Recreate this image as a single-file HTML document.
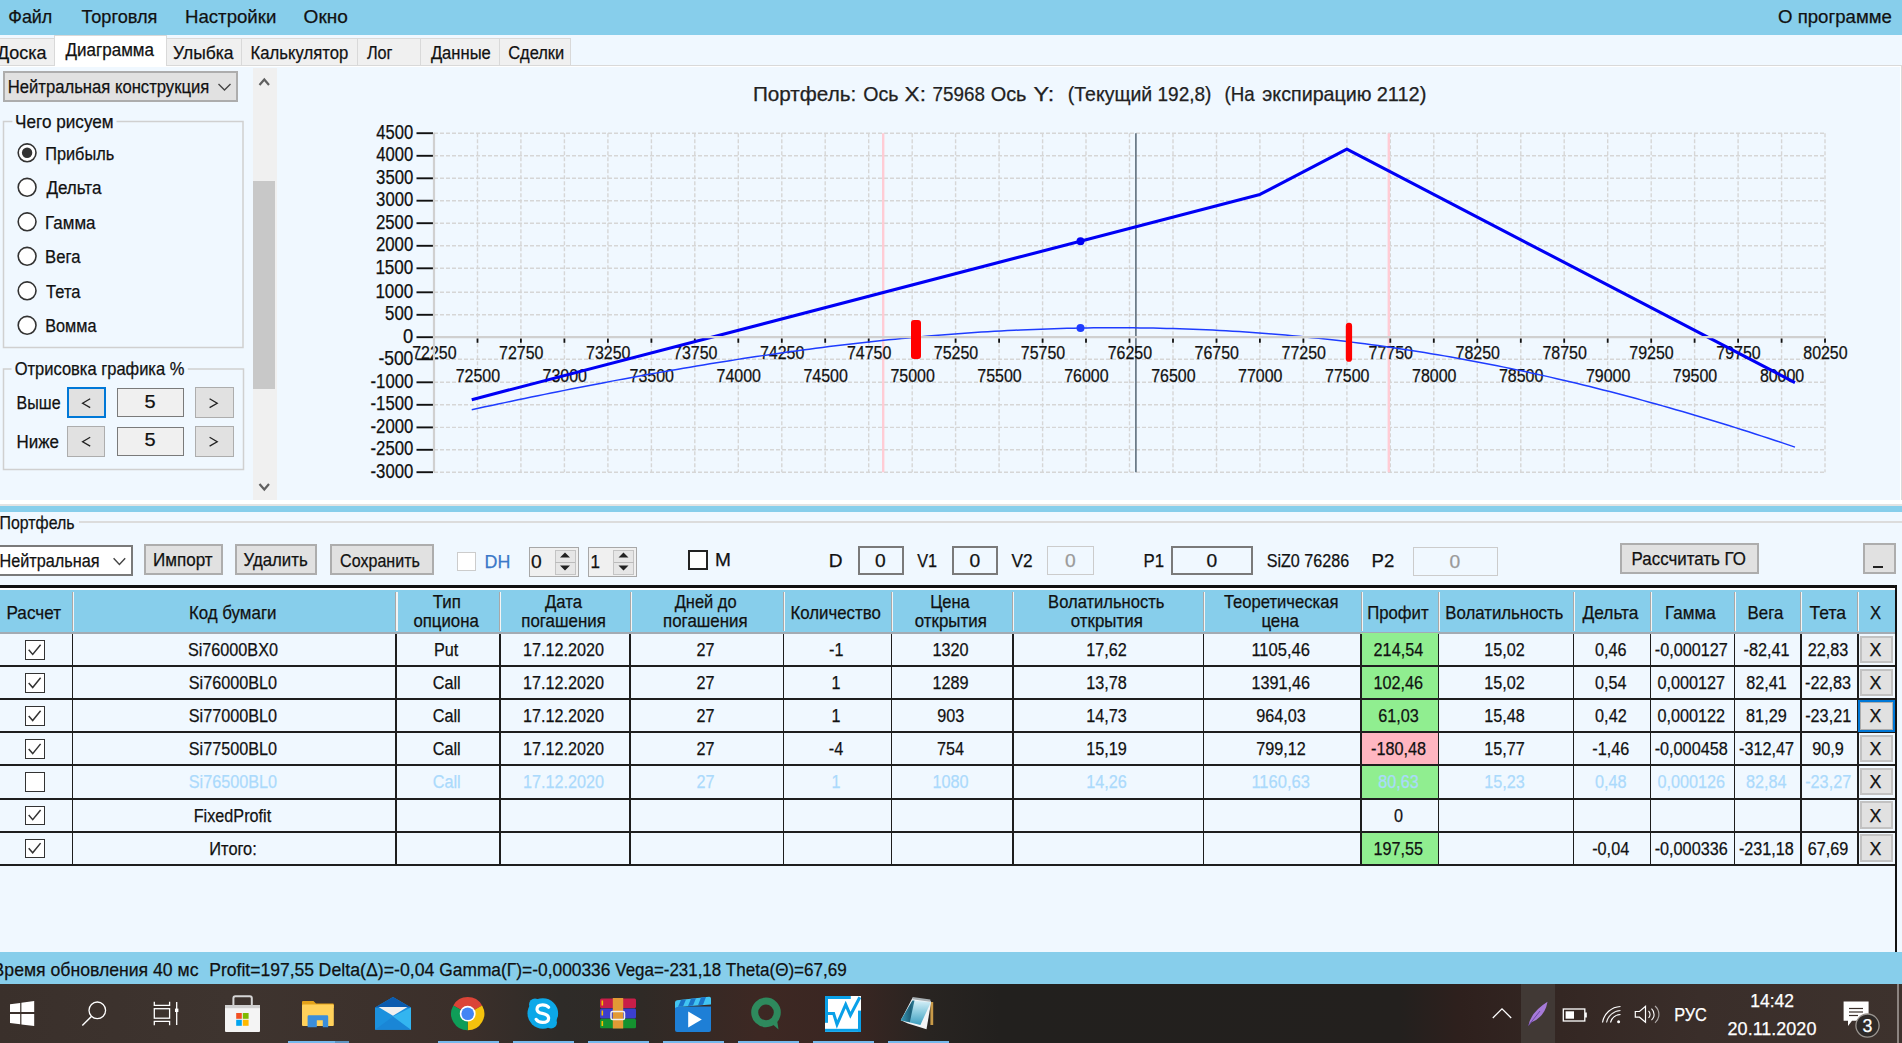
<!DOCTYPE html>
<html><head><meta charset="utf-8"><title>Portfolio</title>
<style>
html,body{margin:0;padding:0;width:1902px;height:1043px;overflow:hidden;background:#F0F8FF;}
#root{position:relative;width:1902px;height:1043px;overflow:hidden;font-family:"Liberation Sans",sans-serif;}
#root>div{position:absolute;}
svg text{font-family:"Liberation Sans",sans-serif;}
</style></head><body><div id="root">
<div style="left:0px;top:0px;width:1902px;height:1043px;background:#F0F8FF;"></div>
<div style="left:0px;top:0px;width:1902px;height:35px;background:#87CEEB;"></div>
<div style="left:0px;top:65px;width:1902px;height:1px;background:#D9D9D9;"></div>
<div style="left:0px;top:66px;width:1902px;height:1px;background:#FFFFFF;"></div>
<div style="left:1901px;top:65px;width:1px;height:436px;background:#D9D9D9;"></div>
<div style="left:1900px;top:66px;width:1px;height:434px;background:#FFFFFF;"></div>
<div style="left:-10px;top:38px;width:65px;height:28px;background:#F0F0F0;border:1px solid #D9D9D9;box-sizing:border-box;"></div>
<div style="left:166px;top:38px;width:76px;height:28px;background:#F0F0F0;border:1px solid #D9D9D9;box-sizing:border-box;"></div>
<div style="left:241px;top:38px;width:117px;height:28px;background:#F0F0F0;border:1px solid #D9D9D9;box-sizing:border-box;"></div>
<div style="left:357px;top:38px;width:64px;height:28px;background:#F0F0F0;border:1px solid #D9D9D9;box-sizing:border-box;"></div>
<div style="left:420px;top:38px;width:80px;height:28px;background:#F0F0F0;border:1px solid #D9D9D9;box-sizing:border-box;"></div>
<div style="left:499px;top:38px;width:72px;height:28px;background:#F0F0F0;border:1px solid #D9D9D9;box-sizing:border-box;"></div>
<div style="left:54px;top:35px;width:113px;height:32px;background:#FFFFFF;"></div>
<div style="left:54px;top:35px;width:1px;height:31px;background:#D9D9D9;"></div>
<div style="left:166px;top:35px;width:1px;height:31px;background:#D9D9D9;"></div>
<div style="left:54px;top:35px;width:113px;height:1px;background:#D9D9D9;"></div>
<div style="left:3px;top:71px;width:235px;height:31px;background:#E1E1E1;border:2px solid #ADADAD;box-sizing:border-box;"></div>
<div style="left:253px;top:68px;width:24px;height:432px;background:#F0F0F0;"></div>
<div style="left:253px;top:181px;width:22px;height:208px;background:#C8C8C8;"></div>
<div style="left:67px;top:387px;width:39px;height:31px;background:#E1E1E1;border:2px solid #0078D7;box-sizing:border-box;"></div>
<div style="left:117px;top:388px;width:67px;height:29px;background:#F0F0F0;border:1px solid #7A7A7A;box-sizing:border-box;"></div>
<div style="left:195px;top:387px;width:39px;height:31px;background:#E1E1E1;border:1px solid #ADADAD;box-sizing:border-box;"></div>
<div style="left:67px;top:425.5px;width:38px;height:31px;background:#E1E1E1;border:1px solid #ADADAD;box-sizing:border-box;"></div>
<div style="left:117px;top:426.5px;width:67px;height:29px;background:#F0F0F0;border:1px solid #7A7A7A;box-sizing:border-box;"></div>
<div style="left:195px;top:425.5px;width:39px;height:31px;background:#E1E1E1;border:1px solid #ADADAD;box-sizing:border-box;"></div>
<div style="left:0px;top:500px;width:1902px;height:5px;background:#FFFFFF;"></div>
<div style="left:0px;top:504px;width:1902px;height:2px;background:#E3E3E3;"></div>
<div style="left:0px;top:506px;width:1902px;height:6px;background:#87CEEB;"></div>
<div style="left:79px;top:521px;width:1823px;height:1.5px;background:#DCDCDC;"></div>
<div style="left:-2px;top:545px;width:135px;height:31px;background:#FFFFFF;border:2px solid #7A7A7A;box-sizing:border-box;"></div>
<div style="left:144px;top:544px;width:79px;height:31px;background:#E1E1E1;border:2px solid #ADADAD;box-sizing:border-box;"></div>
<div style="left:235px;top:544px;width:82px;height:31px;background:#E1E1E1;border:2px solid #ADADAD;box-sizing:border-box;"></div>
<div style="left:330px;top:544px;width:104px;height:31px;background:#E1E1E1;border:2px solid #ADADAD;box-sizing:border-box;"></div>
<div style="left:457px;top:552px;width:19px;height:19px;background:#FFFFFF;border:1.5px solid #CCCCCC;box-sizing:border-box;"></div>
<div style="left:529px;top:547px;width:49.5px;height:29.5px;background:#F0F0F0;border:1.5px solid #A8A8A8;box-sizing:border-box;"></div>
<div style="left:554.5px;top:549.5px;width:21px;height:25px;background:#E6E6E6;border:1px solid #C4C4C4;box-sizing:border-box;"></div>
<div style="left:555px;top:561.5px;width:20px;height:1.2px;background:#BBBBBB;"></div>
<div style="left:587.5px;top:547px;width:49.5px;height:29.5px;background:#F0F0F0;border:1.5px solid #A8A8A8;box-sizing:border-box;"></div>
<div style="left:613.0px;top:549.5px;width:21px;height:25px;background:#E6E6E6;border:1px solid #C4C4C4;box-sizing:border-box;"></div>
<div style="left:613.5px;top:561.5px;width:20px;height:1.2px;background:#BBBBBB;"></div>
<div style="left:688px;top:550px;width:19.5px;height:19.5px;background:#FFFFFF;border:2px solid #222;box-sizing:border-box;"></div>
<div style="left:857.5px;top:545.5px;width:46px;height:29.5px;background:#F0F8FF;border:2px solid #7A7A7A;box-sizing:border-box;"></div>
<div style="left:952px;top:545.5px;width:46px;height:29.5px;background:#F0F8FF;border:2px solid #7A7A7A;box-sizing:border-box;"></div>
<div style="left:1047px;top:546px;width:47px;height:29px;background:#F0F8FF;border:1.5px solid #CCCCCC;box-sizing:border-box;"></div>
<div style="left:1171px;top:545.5px;width:82px;height:29.5px;background:#F0F8FF;border:2px solid #7A7A7A;box-sizing:border-box;"></div>
<div style="left:1413px;top:547px;width:84.5px;height:29px;background:#F0F8FF;border:1.5px solid #CCCCCC;box-sizing:border-box;"></div>
<div style="left:1619.5px;top:542.5px;width:139.0px;height:31.0px;background:#E1E1E1;border:2px solid #ADADAD;box-sizing:border-box;"></div>
<div style="left:1862.5px;top:542.5px;width:33.0px;height:31.0px;background:#E1E1E1;border:2px solid #ADADAD;box-sizing:border-box;"></div>
<div style="left:1872.5px;top:566.2px;width:10px;height:2.2px;background:#222;"></div>
<div style="left:0px;top:588px;width:1896px;height:2px;background:#FFFFFF;"></div>
<div style="left:0px;top:590px;width:1896px;height:42px;background:#87CEEB;"></div>
<div style="left:0px;top:632px;width:1896px;height:2px;background:#A3ABB3;"></div>
<div style="left:71.8px;top:592px;width:1px;height:38.5px;background:#A8A8A8;"></div>
<div style="left:72.8px;top:592px;width:1.2px;height:38.5px;background:#F4F4F4;"></div>
<div style="left:395.4px;top:592px;width:1px;height:38.5px;background:#A8A8A8;"></div>
<div style="left:396.4px;top:592px;width:1.2px;height:38.5px;background:#F4F4F4;"></div>
<div style="left:499.1px;top:592px;width:1px;height:38.5px;background:#A8A8A8;"></div>
<div style="left:500.1px;top:592px;width:1.2px;height:38.5px;background:#F4F4F4;"></div>
<div style="left:629.6px;top:592px;width:1px;height:38.5px;background:#A8A8A8;"></div>
<div style="left:630.6px;top:592px;width:1.2px;height:38.5px;background:#F4F4F4;"></div>
<div style="left:782.7px;top:592px;width:1px;height:38.5px;background:#A8A8A8;"></div>
<div style="left:783.7px;top:592px;width:1.2px;height:38.5px;background:#F4F4F4;"></div>
<div style="left:890.8px;top:592px;width:1px;height:38.5px;background:#A8A8A8;"></div>
<div style="left:891.8px;top:592px;width:1.2px;height:38.5px;background:#F4F4F4;"></div>
<div style="left:1012.0px;top:592px;width:1px;height:38.5px;background:#A8A8A8;"></div>
<div style="left:1013.0px;top:592px;width:1.2px;height:38.5px;background:#F4F4F4;"></div>
<div style="left:1202.7px;top:592px;width:1px;height:38.5px;background:#A8A8A8;"></div>
<div style="left:1203.7px;top:592px;width:1.2px;height:38.5px;background:#F4F4F4;"></div>
<div style="left:1360.5px;top:592px;width:1px;height:38.5px;background:#A8A8A8;"></div>
<div style="left:1361.5px;top:592px;width:1.2px;height:38.5px;background:#F4F4F4;"></div>
<div style="left:1437.9px;top:592px;width:1px;height:38.5px;background:#A8A8A8;"></div>
<div style="left:1438.9px;top:592px;width:1.2px;height:38.5px;background:#F4F4F4;"></div>
<div style="left:1572.9px;top:592px;width:1px;height:38.5px;background:#A8A8A8;"></div>
<div style="left:1573.9px;top:592px;width:1.2px;height:38.5px;background:#F4F4F4;"></div>
<div style="left:1649.8px;top:592px;width:1px;height:38.5px;background:#A8A8A8;"></div>
<div style="left:1650.8px;top:592px;width:1.2px;height:38.5px;background:#F4F4F4;"></div>
<div style="left:1733.9px;top:592px;width:1px;height:38.5px;background:#A8A8A8;"></div>
<div style="left:1734.9px;top:592px;width:1.2px;height:38.5px;background:#F4F4F4;"></div>
<div style="left:1800.1px;top:592px;width:1px;height:38.5px;background:#A8A8A8;"></div>
<div style="left:1801.1px;top:592px;width:1.2px;height:38.5px;background:#F4F4F4;"></div>
<div style="left:1857.3px;top:592px;width:1px;height:38.5px;background:#A8A8A8;"></div>
<div style="left:1858.3px;top:592px;width:1.2px;height:38.5px;background:#F4F4F4;"></div>
<div style="left:1361.1px;top:633.2px;width:77.40000000000009px;height:33.059999999999945px;background:#90EE90;"></div>
<div style="left:1361.1px;top:666.26px;width:77.40000000000009px;height:33.06000000000006px;background:#90EE90;"></div>
<div style="left:1361.1px;top:699.32px;width:77.40000000000009px;height:33.06000000000006px;background:#90EE90;"></div>
<div style="left:1361.1px;top:732.3800000000001px;width:77.40000000000009px;height:33.059999999999945px;background:#FFB6C1;"></div>
<div style="left:1361.1px;top:765.44px;width:77.40000000000009px;height:33.059999999999945px;background:#90EE90;"></div>
<div style="left:1361.1px;top:831.5600000000001px;width:77.40000000000009px;height:33.06000000000006px;background:#90EE90;"></div>
<div style="left:0px;top:665.3px;width:1896px;height:2px;background:#1E1E1E;"></div>
<div style="left:0px;top:698.3px;width:1896px;height:2px;background:#1E1E1E;"></div>
<div style="left:0px;top:731.4px;width:1896px;height:2px;background:#1E1E1E;"></div>
<div style="left:0px;top:764.4px;width:1896px;height:2px;background:#1E1E1E;"></div>
<div style="left:0px;top:797.5px;width:1896px;height:2px;background:#1E1E1E;"></div>
<div style="left:0px;top:830.6px;width:1896px;height:2px;background:#1E1E1E;"></div>
<div style="left:0px;top:863.6px;width:1896px;height:2px;background:#1E1E1E;"></div>
<div style="left:71.6px;top:634px;width:1.8px;height:230.62000000000012px;background:#1E1E1E;"></div>
<div style="left:395.2px;top:634px;width:1.8px;height:230.62000000000012px;background:#1E1E1E;"></div>
<div style="left:498.9px;top:634px;width:1.8px;height:230.62000000000012px;background:#1E1E1E;"></div>
<div style="left:629.4px;top:634px;width:1.8px;height:230.62000000000012px;background:#1E1E1E;"></div>
<div style="left:782.5px;top:634px;width:1.8px;height:230.62000000000012px;background:#1E1E1E;"></div>
<div style="left:890.6px;top:634px;width:1.8px;height:230.62000000000012px;background:#1E1E1E;"></div>
<div style="left:1011.8px;top:634px;width:1.8px;height:230.62000000000012px;background:#1E1E1E;"></div>
<div style="left:1202.5px;top:634px;width:1.8px;height:230.62000000000012px;background:#1E1E1E;"></div>
<div style="left:1360.3px;top:634px;width:1.8px;height:230.62000000000012px;background:#1E1E1E;"></div>
<div style="left:1437.7px;top:634px;width:1.8px;height:230.62000000000012px;background:#1E1E1E;"></div>
<div style="left:1572.7px;top:634px;width:1.8px;height:230.62000000000012px;background:#1E1E1E;"></div>
<div style="left:1649.6px;top:634px;width:1.8px;height:230.62000000000012px;background:#1E1E1E;"></div>
<div style="left:1733.7px;top:634px;width:1.8px;height:230.62000000000012px;background:#1E1E1E;"></div>
<div style="left:1799.9px;top:634px;width:1.8px;height:230.62000000000012px;background:#1E1E1E;"></div>
<div style="left:1857.1px;top:634px;width:1.8px;height:230.62000000000012px;background:#1E1E1E;"></div>
<div style="left:0px;top:585.3px;width:1897px;height:3px;background:#111;border-top-right-radius:3px;"></div>
<div style="left:1894.6px;top:585.3px;width:2.6px;height:366.70000000000005px;background:#111;"></div>
<div style="left:1859.5px;top:635.8000000000001px;width:33px;height:27.459999999999944px;background:#E1E1E1;border:2px solid #C2C2C2;box-sizing:border-box;"></div>
<div style="left:1859.5px;top:668.86px;width:33px;height:27.460000000000058px;background:#E1E1E1;border:2px solid #C2C2C2;box-sizing:border-box;"></div>
<div style="left:1857.5px;top:699.82px;width:37.2px;height:32.06000000000006px;background:#0078D7;"></div>
<div style="left:1859.5px;top:701.82px;width:33px;height:28.06000000000006px;background:#E1E1E1;border:1px solid #ADADAD;box-sizing:border-box;"></div>
<div style="left:1859.5px;top:734.9800000000001px;width:33px;height:27.459999999999944px;background:#E1E1E1;border:2px solid #C2C2C2;box-sizing:border-box;"></div>
<div style="left:1859.5px;top:768.0400000000001px;width:33px;height:27.459999999999944px;background:#E1E1E1;border:2px solid #C2C2C2;box-sizing:border-box;"></div>
<div style="left:1859.5px;top:801.1px;width:33px;height:27.460000000000058px;background:#E1E1E1;border:2px solid #C2C2C2;box-sizing:border-box;"></div>
<div style="left:1859.5px;top:834.1600000000001px;width:33px;height:27.460000000000058px;background:#E1E1E1;border:2px solid #C2C2C2;box-sizing:border-box;"></div>
<div style="left:25px;top:640.2px;width:19.5px;height:19.5px;background:#FFFFFF;border:1.8px solid #333;box-sizing:border-box;"></div>
<div style="left:25px;top:673.26px;width:19.5px;height:19.5px;background:#FFFFFF;border:1.8px solid #333;box-sizing:border-box;"></div>
<div style="left:25px;top:706.32px;width:19.5px;height:19.5px;background:#FFFFFF;border:1.8px solid #333;box-sizing:border-box;"></div>
<div style="left:25px;top:739.3800000000001px;width:19.5px;height:19.5px;background:#FFFFFF;border:1.8px solid #333;box-sizing:border-box;"></div>
<div style="left:25px;top:772.44px;width:19.5px;height:19.5px;background:#FFFFFF;border:1.8px solid #333;box-sizing:border-box;"></div>
<div style="left:25px;top:805.5px;width:19.5px;height:19.5px;background:#FFFFFF;border:1.8px solid #333;box-sizing:border-box;"></div>
<div style="left:25px;top:838.5600000000001px;width:19.5px;height:19.5px;background:#FFFFFF;border:1.8px solid #333;box-sizing:border-box;"></div>
<div style="left:0px;top:952px;width:1902px;height:32px;background:#87CEEB;"></div>
<div style="left:0px;top:984px;width:1902px;height:59px;background:linear-gradient(90deg,#3A302B 0px,#3E342F 230px,#3B2F2A 470px,#2E2B28 560px,#2F2A26 640px,#3D2823 760px,#3A2622 850px,#282421 930px,#22201E 1000px,#23201E 1400px,#2E201D 1460px,#342723 1560px,#3A2E2A 1700px,#3D322D 1902px);"></div>
<div style="left:1521px;top:984px;width:34px;height:59px;background:#413935;"></div>
<div style="left:1897px;top:984px;width:2px;height:59px;background:#8C8480;"></div>
<div style="left:288px;top:1040.8px;width:47px;height:2.2px;background:#76B9ED;"></div>
<div style="left:438px;top:1040.8px;width:61px;height:2.2px;background:#76B9ED;"></div>
<div style="left:513px;top:1040.8px;width:61px;height:2.2px;background:#76B9ED;"></div>
<div style="left:588px;top:1040.8px;width:61px;height:2.2px;background:#76B9ED;"></div>
<div style="left:663px;top:1040.8px;width:61px;height:2.2px;background:#76B9ED;"></div>
<div style="left:738px;top:1040.8px;width:61px;height:2.2px;background:#76B9ED;"></div>
<div style="left:813px;top:1040.8px;width:61px;height:2.2px;background:#76B9ED;"></div>
<div style="left:888px;top:1040.8px;width:61px;height:2.2px;background:#76B9ED;"></div>
<div style="left:335px;top:1040.8px;width:13.7px;height:2.2px;background:#5E95C2;"></div>
<svg style="position:absolute;left:0;top:0" width="1902" height="1043" viewBox="0 0 1902 1043">
<text x="8.3" y="22.6" font-size="19.04" fill="#111" stroke="#111" stroke-width="0.25" textLength="44.0" lengthAdjust="spacingAndGlyphs">Файл</text>
<text x="81.6" y="22.6" font-size="19.04" fill="#111" stroke="#111" stroke-width="0.25" textLength="75.8" lengthAdjust="spacingAndGlyphs">Торговля</text>
<text x="185.0" y="22.6" font-size="19.04" fill="#111" stroke="#111" stroke-width="0.25" textLength="91.3" lengthAdjust="spacingAndGlyphs">Настройки</text>
<text x="303.6" y="22.6" font-size="19.04" fill="#111" stroke="#111" stroke-width="0.25">Окно</text>
<text x="1778.1" y="22.8" font-size="18.90" fill="#111" stroke="#111" stroke-width="0.25" textLength="113.7" lengthAdjust="spacingAndGlyphs">О программе</text>
<text x="-3.1" y="58.5" font-size="18.90" fill="#111" stroke="#111" stroke-width="0.25" textLength="49.6" lengthAdjust="spacingAndGlyphs">Доска</text>
<text x="65.6" y="55.7" font-size="18.90" fill="#111" stroke="#111" stroke-width="0.25" textLength="88.4" lengthAdjust="spacingAndGlyphs">Диаграмма</text>
<text x="173.0" y="58.5" font-size="18.90" fill="#111" stroke="#111" stroke-width="0.25" textLength="60.5" lengthAdjust="spacingAndGlyphs">Улыбка</text>
<text x="250.6" y="58.5" font-size="18.90" fill="#111" stroke="#111" stroke-width="0.25" textLength="97.6" lengthAdjust="spacingAndGlyphs">Калькулятор</text>
<text x="366.9" y="58.5" font-size="18.90" fill="#111" stroke="#111" stroke-width="0.25" textLength="25.6" lengthAdjust="spacingAndGlyphs">Лог</text>
<text x="430.9" y="58.5" font-size="18.90" fill="#111" stroke="#111" stroke-width="0.25" textLength="59.9" lengthAdjust="spacingAndGlyphs">Данные</text>
<text x="508.2" y="58.5" font-size="18.90" fill="#111" stroke="#111" stroke-width="0.25" textLength="56.0" lengthAdjust="spacingAndGlyphs">Сделки</text>
<text x="7.8" y="93.3" font-size="19.19" fill="#111" stroke="#111" stroke-width="0.25" textLength="201.5" lengthAdjust="spacingAndGlyphs">Нейтральная конструкция</text>
<polyline points="218.5,84 224.5,90 230.5,84" fill="none" stroke="#444" stroke-width="1.4"/>
<polyline points="259.5,85 264.3,79.5 269,85" fill="none" stroke="#606060" stroke-width="2.2"/>
<polyline points="259.5,484 264.3,489.5 269,484" fill="none" stroke="#606060" stroke-width="2.2"/>
<path d="M12.399999999999999,121.5 H3.5 V347.5 H243 V121.5 H116.5" fill="none" stroke="#D0D0D0" stroke-width="1.5"/>
<text x="15.1" y="127.6" font-size="17.59" fill="#111" stroke="#111" stroke-width="0.25" textLength="98.5" lengthAdjust="spacingAndGlyphs">Чего рисуем</text>
<circle cx="27.1" cy="152.8" r="8.9" fill="#FFFFFF" stroke="#333" stroke-width="1.6"/>
<circle cx="27.1" cy="152.8" r="5.2" fill="#333"/>
<circle cx="27.1" cy="187.3" r="8.9" fill="#FFFFFF" stroke="#333" stroke-width="1.6"/>
<circle cx="27.1" cy="221.8" r="8.9" fill="#FFFFFF" stroke="#333" stroke-width="1.6"/>
<circle cx="27.1" cy="256.3" r="8.9" fill="#FFFFFF" stroke="#333" stroke-width="1.6"/>
<circle cx="27.1" cy="290.8" r="8.9" fill="#FFFFFF" stroke="#333" stroke-width="1.6"/>
<circle cx="27.1" cy="325.3" r="8.9" fill="#FFFFFF" stroke="#333" stroke-width="1.6"/>
<text x="45.2" y="159.5" font-size="18.90" fill="#111" stroke="#111" stroke-width="0.25" textLength="69.0" lengthAdjust="spacingAndGlyphs">Прибыль</text>
<text x="46.4" y="194.0" font-size="18.90" fill="#111" stroke="#111" stroke-width="0.25" textLength="55.1" lengthAdjust="spacingAndGlyphs">Дельта</text>
<text x="45.1" y="228.5" font-size="18.90" fill="#111" stroke="#111" stroke-width="0.25" textLength="50.4" lengthAdjust="spacingAndGlyphs">Гамма</text>
<text x="45.1" y="263.0" font-size="18.90" fill="#111" stroke="#111" stroke-width="0.25" textLength="35.4" lengthAdjust="spacingAndGlyphs">Вега</text>
<text x="46.1" y="297.5" font-size="18.90" fill="#111" stroke="#111" stroke-width="0.25" textLength="34.4" lengthAdjust="spacingAndGlyphs">Тета</text>
<text x="45.2" y="332.0" font-size="18.90" fill="#111" stroke="#111" stroke-width="0.25" textLength="51.3" lengthAdjust="spacingAndGlyphs">Вомма</text>
<path d="M11.5,369 H3.5 V469.5 H243.5 V369 H187.8" fill="none" stroke="#D0D0D0" stroke-width="1.5"/>
<text x="14.7" y="375.0" font-size="17.73" fill="#111" stroke="#111" stroke-width="0.25" textLength="169.7" lengthAdjust="spacingAndGlyphs">Отрисовка графика %</text>
<text x="16.6" y="409.2" font-size="18.90" fill="#111" stroke="#111" stroke-width="0.25" textLength="44.0" lengthAdjust="spacingAndGlyphs">Выше</text>
<text x="16.5" y="447.8" font-size="18.90" fill="#111" stroke="#111" stroke-width="0.25" textLength="42.5" lengthAdjust="spacingAndGlyphs">Ниже</text>
<polyline points="90.2,398.8 82.6,403.2 90.2,407.6" fill="none" stroke="#222" stroke-width="1.3"/>
<text x="144.6" y="407.7" font-size="18.90" fill="#111" stroke="#111" stroke-width="0.25" textLength="11.1" lengthAdjust="spacingAndGlyphs">5</text>
<polyline points="209.6,398.8 217.2,403.2 209.6,407.6" fill="none" stroke="#222" stroke-width="1.3"/>
<polyline points="90.2,437.3 82.6,441.7 90.2,446.1" fill="none" stroke="#222" stroke-width="1.3"/>
<text x="144.6" y="446.2" font-size="18.90" fill="#111" stroke="#111" stroke-width="0.25" textLength="11.1" lengthAdjust="spacingAndGlyphs">5</text>
<polyline points="209.6,437.3 217.2,441.7 209.6,446.1" fill="none" stroke="#222" stroke-width="1.3"/>
<text x="752.9" y="100.6" font-size="20.06" fill="#222" stroke="#222" stroke-width="0.25" textLength="103.4" lengthAdjust="spacingAndGlyphs">Портфель:</text>
<text x="863.3" y="100.6" font-size="20.06" fill="#222" stroke="#222" stroke-width="0.25" textLength="35.2" lengthAdjust="spacingAndGlyphs">Ось</text>
<text x="904.6" y="100.6" font-size="20.06" fill="#222" stroke="#222" stroke-width="0.25" textLength="21.4" lengthAdjust="spacingAndGlyphs">X:</text>
<text x="932.6" y="100.6" font-size="20.06" fill="#222" stroke="#222" stroke-width="0.25" textLength="52.4" lengthAdjust="spacingAndGlyphs">75968</text>
<text x="990.7" y="100.6" font-size="20.06" fill="#222" stroke="#222" stroke-width="0.25" textLength="35.8" lengthAdjust="spacingAndGlyphs">Ось</text>
<text x="1033.4" y="100.6" font-size="20.06" fill="#222" stroke="#222" stroke-width="0.25" textLength="20.9" lengthAdjust="spacingAndGlyphs">Y:</text>
<text x="1067.8" y="100.6" font-size="20.06" fill="#222" stroke="#222" stroke-width="0.25" textLength="84.4" lengthAdjust="spacingAndGlyphs">(Текущий</text>
<text x="1157.5" y="100.6" font-size="20.06" fill="#222" stroke="#222" stroke-width="0.25" textLength="53.9" lengthAdjust="spacingAndGlyphs">192,8)</text>
<text x="1224.6" y="100.6" font-size="20.06" fill="#222" stroke="#222" stroke-width="0.25" textLength="30.2" lengthAdjust="spacingAndGlyphs">(На</text>
<text x="1262.3" y="100.6" font-size="20.06" fill="#222" stroke="#222" stroke-width="0.25" textLength="109.3" lengthAdjust="spacingAndGlyphs">экспирацию</text>
<text x="1376.7" y="100.6" font-size="20.06" fill="#222" stroke="#222" stroke-width="0.25" textLength="49.7" lengthAdjust="spacingAndGlyphs">2112)</text>
<line x1="477.5" y1="133.2" x2="477.5" y2="472.2" stroke="#D6D6D6" stroke-width="1.4" stroke-dasharray="4 2"/>
<line x1="520.9" y1="133.2" x2="520.9" y2="472.2" stroke="#D6D6D6" stroke-width="1.4" stroke-dasharray="4 2"/>
<line x1="564.4" y1="133.2" x2="564.4" y2="472.2" stroke="#D6D6D6" stroke-width="1.4" stroke-dasharray="4 2"/>
<line x1="607.9" y1="133.2" x2="607.9" y2="472.2" stroke="#D6D6D6" stroke-width="1.4" stroke-dasharray="4 2"/>
<line x1="651.4" y1="133.2" x2="651.4" y2="472.2" stroke="#D6D6D6" stroke-width="1.4" stroke-dasharray="4 2"/>
<line x1="694.8" y1="133.2" x2="694.8" y2="472.2" stroke="#D6D6D6" stroke-width="1.4" stroke-dasharray="4 2"/>
<line x1="738.3" y1="133.2" x2="738.3" y2="472.2" stroke="#D6D6D6" stroke-width="1.4" stroke-dasharray="4 2"/>
<line x1="781.8" y1="133.2" x2="781.8" y2="472.2" stroke="#D6D6D6" stroke-width="1.4" stroke-dasharray="4 2"/>
<line x1="825.2" y1="133.2" x2="825.2" y2="472.2" stroke="#D6D6D6" stroke-width="1.4" stroke-dasharray="4 2"/>
<line x1="868.7" y1="133.2" x2="868.7" y2="472.2" stroke="#D6D6D6" stroke-width="1.4" stroke-dasharray="4 2"/>
<line x1="912.2" y1="133.2" x2="912.2" y2="472.2" stroke="#D6D6D6" stroke-width="1.4" stroke-dasharray="4 2"/>
<line x1="955.6" y1="133.2" x2="955.6" y2="472.2" stroke="#D6D6D6" stroke-width="1.4" stroke-dasharray="4 2"/>
<line x1="999.1" y1="133.2" x2="999.1" y2="472.2" stroke="#D6D6D6" stroke-width="1.4" stroke-dasharray="4 2"/>
<line x1="1042.6" y1="133.2" x2="1042.6" y2="472.2" stroke="#D6D6D6" stroke-width="1.4" stroke-dasharray="4 2"/>
<line x1="1086.0" y1="133.2" x2="1086.0" y2="472.2" stroke="#D6D6D6" stroke-width="1.4" stroke-dasharray="4 2"/>
<line x1="1129.5" y1="133.2" x2="1129.5" y2="472.2" stroke="#D6D6D6" stroke-width="1.4" stroke-dasharray="4 2"/>
<line x1="1173.0" y1="133.2" x2="1173.0" y2="472.2" stroke="#D6D6D6" stroke-width="1.4" stroke-dasharray="4 2"/>
<line x1="1216.5" y1="133.2" x2="1216.5" y2="472.2" stroke="#D6D6D6" stroke-width="1.4" stroke-dasharray="4 2"/>
<line x1="1259.9" y1="133.2" x2="1259.9" y2="472.2" stroke="#D6D6D6" stroke-width="1.4" stroke-dasharray="4 2"/>
<line x1="1303.4" y1="133.2" x2="1303.4" y2="472.2" stroke="#D6D6D6" stroke-width="1.4" stroke-dasharray="4 2"/>
<line x1="1346.9" y1="133.2" x2="1346.9" y2="472.2" stroke="#D6D6D6" stroke-width="1.4" stroke-dasharray="4 2"/>
<line x1="1390.3" y1="133.2" x2="1390.3" y2="472.2" stroke="#D6D6D6" stroke-width="1.4" stroke-dasharray="4 2"/>
<line x1="1433.8" y1="133.2" x2="1433.8" y2="472.2" stroke="#D6D6D6" stroke-width="1.4" stroke-dasharray="4 2"/>
<line x1="1477.3" y1="133.2" x2="1477.3" y2="472.2" stroke="#D6D6D6" stroke-width="1.4" stroke-dasharray="4 2"/>
<line x1="1520.8" y1="133.2" x2="1520.8" y2="472.2" stroke="#D6D6D6" stroke-width="1.4" stroke-dasharray="4 2"/>
<line x1="1564.2" y1="133.2" x2="1564.2" y2="472.2" stroke="#D6D6D6" stroke-width="1.4" stroke-dasharray="4 2"/>
<line x1="1607.7" y1="133.2" x2="1607.7" y2="472.2" stroke="#D6D6D6" stroke-width="1.4" stroke-dasharray="4 2"/>
<line x1="1651.2" y1="133.2" x2="1651.2" y2="472.2" stroke="#D6D6D6" stroke-width="1.4" stroke-dasharray="4 2"/>
<line x1="1694.6" y1="133.2" x2="1694.6" y2="472.2" stroke="#D6D6D6" stroke-width="1.4" stroke-dasharray="4 2"/>
<line x1="1738.1" y1="133.2" x2="1738.1" y2="472.2" stroke="#D6D6D6" stroke-width="1.4" stroke-dasharray="4 2"/>
<line x1="1781.6" y1="133.2" x2="1781.6" y2="472.2" stroke="#D6D6D6" stroke-width="1.4" stroke-dasharray="4 2"/>
<line x1="1825.0" y1="133.2" x2="1825.0" y2="472.2" stroke="#D6D6D6" stroke-width="1.4" stroke-dasharray="4 2"/>
<line x1="434.0" y1="133.2" x2="1825.0" y2="133.2" stroke="#D6D6D6" stroke-width="1.4" stroke-dasharray="4 2"/>
<line x1="434.0" y1="155.8" x2="1825.0" y2="155.8" stroke="#D6D6D6" stroke-width="1.4" stroke-dasharray="4 2"/>
<line x1="434.0" y1="178.3" x2="1825.0" y2="178.3" stroke="#D6D6D6" stroke-width="1.4" stroke-dasharray="4 2"/>
<line x1="434.0" y1="200.7" x2="1825.0" y2="200.7" stroke="#D6D6D6" stroke-width="1.4" stroke-dasharray="4 2"/>
<line x1="434.0" y1="223.2" x2="1825.0" y2="223.2" stroke="#D6D6D6" stroke-width="1.4" stroke-dasharray="4 2"/>
<line x1="434.0" y1="245.8" x2="1825.0" y2="245.8" stroke="#D6D6D6" stroke-width="1.4" stroke-dasharray="4 2"/>
<line x1="434.0" y1="268.3" x2="1825.0" y2="268.3" stroke="#D6D6D6" stroke-width="1.4" stroke-dasharray="4 2"/>
<line x1="434.0" y1="292.3" x2="1825.0" y2="292.3" stroke="#D6D6D6" stroke-width="1.4" stroke-dasharray="4 2"/>
<line x1="434.0" y1="314.8" x2="1825.0" y2="314.8" stroke="#D6D6D6" stroke-width="1.4" stroke-dasharray="4 2"/>
<line x1="434.0" y1="337.2" x2="1825.0" y2="337.2" stroke="#D6D6D6" stroke-width="1.4" stroke-dasharray="4 2"/>
<line x1="434.0" y1="359.3" x2="1825.0" y2="359.3" stroke="#D6D6D6" stroke-width="1.4" stroke-dasharray="4 2"/>
<line x1="434.0" y1="382.3" x2="1825.0" y2="382.3" stroke="#D6D6D6" stroke-width="1.4" stroke-dasharray="4 2"/>
<line x1="434.0" y1="404.8" x2="1825.0" y2="404.8" stroke="#D6D6D6" stroke-width="1.4" stroke-dasharray="4 2"/>
<line x1="434.0" y1="427.4" x2="1825.0" y2="427.4" stroke="#D6D6D6" stroke-width="1.4" stroke-dasharray="4 2"/>
<line x1="434.0" y1="449.8" x2="1825.0" y2="449.8" stroke="#D6D6D6" stroke-width="1.4" stroke-dasharray="4 2"/>
<line x1="434.0" y1="472.2" x2="1825.0" y2="472.2" stroke="#D6D6D6" stroke-width="1.4" stroke-dasharray="4 2"/>
<line x1="883.2" y1="133.2" x2="883.2" y2="472.2" stroke="#FFCCD5" stroke-width="2.4"/>
<line x1="1388.8" y1="133.2" x2="1388.8" y2="472.2" stroke="#FFCCD5" stroke-width="2.4"/>
<line x1="1135.9" y1="133.2" x2="1135.9" y2="472.2" stroke="#5E6E7C" stroke-width="1.6"/>
<line x1="416.5" y1="133.2" x2="433" y2="133.2" stroke="#111" stroke-width="1.9"/>
<line x1="416.5" y1="155.8" x2="433" y2="155.8" stroke="#111" stroke-width="1.9"/>
<line x1="416.5" y1="178.3" x2="433" y2="178.3" stroke="#111" stroke-width="1.9"/>
<line x1="416.5" y1="200.7" x2="433" y2="200.7" stroke="#111" stroke-width="1.9"/>
<line x1="416.5" y1="223.2" x2="433" y2="223.2" stroke="#111" stroke-width="1.9"/>
<line x1="416.5" y1="245.8" x2="433" y2="245.8" stroke="#111" stroke-width="1.9"/>
<line x1="416.5" y1="268.3" x2="433" y2="268.3" stroke="#111" stroke-width="1.9"/>
<line x1="416.5" y1="292.3" x2="433" y2="292.3" stroke="#111" stroke-width="1.9"/>
<line x1="416.5" y1="314.8" x2="433" y2="314.8" stroke="#111" stroke-width="1.9"/>
<line x1="416.5" y1="337.2" x2="433" y2="337.2" stroke="#111" stroke-width="1.9"/>
<line x1="416.5" y1="359.3" x2="433" y2="359.3" stroke="#111" stroke-width="1.9"/>
<line x1="416.5" y1="382.3" x2="433" y2="382.3" stroke="#111" stroke-width="1.9"/>
<line x1="416.5" y1="404.8" x2="433" y2="404.8" stroke="#111" stroke-width="1.9"/>
<line x1="416.5" y1="427.4" x2="433" y2="427.4" stroke="#111" stroke-width="1.9"/>
<line x1="416.5" y1="449.8" x2="433" y2="449.8" stroke="#111" stroke-width="1.9"/>
<line x1="416.5" y1="472.2" x2="433" y2="472.2" stroke="#111" stroke-width="1.9"/>
<text x="376.3" y="138.6" font-size="19.33" fill="#111" stroke="#111" stroke-width="0.25" textLength="36.9" lengthAdjust="spacingAndGlyphs">4500</text>
<text x="376.3" y="161.2" font-size="19.33" fill="#111" stroke="#111" stroke-width="0.25" textLength="36.9" lengthAdjust="spacingAndGlyphs">4000</text>
<text x="376.1" y="183.7" font-size="19.33" fill="#111" stroke="#111" stroke-width="0.25" textLength="37.2" lengthAdjust="spacingAndGlyphs">3500</text>
<text x="376.1" y="206.1" font-size="19.33" fill="#111" stroke="#111" stroke-width="0.25" textLength="37.2" lengthAdjust="spacingAndGlyphs">3000</text>
<text x="375.9" y="228.6" font-size="19.33" fill="#111" stroke="#111" stroke-width="0.25" textLength="37.4" lengthAdjust="spacingAndGlyphs">2500</text>
<text x="375.9" y="251.2" font-size="19.33" fill="#111" stroke="#111" stroke-width="0.25" textLength="37.4" lengthAdjust="spacingAndGlyphs">2000</text>
<text x="375.4" y="273.7" font-size="19.33" fill="#111" stroke="#111" stroke-width="0.25" textLength="37.9" lengthAdjust="spacingAndGlyphs">1500</text>
<text x="375.4" y="297.7" font-size="19.33" fill="#111" stroke="#111" stroke-width="0.25" textLength="37.9" lengthAdjust="spacingAndGlyphs">1000</text>
<text x="385.1" y="320.2" font-size="19.33" fill="#111" stroke="#111" stroke-width="0.25" textLength="28.1" lengthAdjust="spacingAndGlyphs">500</text>
<text x="403.1" y="342.6" font-size="19.33" fill="#111" stroke="#111" stroke-width="0.25" textLength="10.2" lengthAdjust="spacingAndGlyphs">0</text>
<text x="378.4" y="364.7" font-size="19.33" fill="#111" stroke="#111" stroke-width="0.25" textLength="34.9" lengthAdjust="spacingAndGlyphs">-500</text>
<text x="370.5" y="387.7" font-size="19.33" fill="#111" stroke="#111" stroke-width="0.25" textLength="42.8" lengthAdjust="spacingAndGlyphs">-1000</text>
<text x="370.5" y="410.2" font-size="19.33" fill="#111" stroke="#111" stroke-width="0.25" textLength="42.8" lengthAdjust="spacingAndGlyphs">-1500</text>
<text x="370.5" y="432.8" font-size="19.33" fill="#111" stroke="#111" stroke-width="0.25" textLength="42.8" lengthAdjust="spacingAndGlyphs">-2000</text>
<text x="370.5" y="455.2" font-size="19.33" fill="#111" stroke="#111" stroke-width="0.25" textLength="42.8" lengthAdjust="spacingAndGlyphs">-2500</text>
<text x="370.5" y="477.6" font-size="19.33" fill="#111" stroke="#111" stroke-width="0.25" textLength="42.8" lengthAdjust="spacingAndGlyphs">-3000</text>
<line x1="434.0" y1="338.4" x2="434.0" y2="342.8" stroke="#111" stroke-width="1.8"/>
<line x1="477.5" y1="338.4" x2="477.5" y2="342.8" stroke="#111" stroke-width="1.8"/>
<line x1="520.9" y1="338.4" x2="520.9" y2="342.8" stroke="#111" stroke-width="1.8"/>
<line x1="564.4" y1="338.4" x2="564.4" y2="342.8" stroke="#111" stroke-width="1.8"/>
<line x1="607.9" y1="338.4" x2="607.9" y2="342.8" stroke="#111" stroke-width="1.8"/>
<line x1="651.4" y1="338.4" x2="651.4" y2="342.8" stroke="#111" stroke-width="1.8"/>
<line x1="694.8" y1="338.4" x2="694.8" y2="342.8" stroke="#111" stroke-width="1.8"/>
<line x1="738.3" y1="338.4" x2="738.3" y2="342.8" stroke="#111" stroke-width="1.8"/>
<line x1="781.8" y1="338.4" x2="781.8" y2="342.8" stroke="#111" stroke-width="1.8"/>
<line x1="825.2" y1="338.4" x2="825.2" y2="342.8" stroke="#111" stroke-width="1.8"/>
<line x1="868.7" y1="338.4" x2="868.7" y2="342.8" stroke="#111" stroke-width="1.8"/>
<line x1="912.2" y1="338.4" x2="912.2" y2="342.8" stroke="#111" stroke-width="1.8"/>
<line x1="955.6" y1="338.4" x2="955.6" y2="342.8" stroke="#111" stroke-width="1.8"/>
<line x1="999.1" y1="338.4" x2="999.1" y2="342.8" stroke="#111" stroke-width="1.8"/>
<line x1="1042.6" y1="338.4" x2="1042.6" y2="342.8" stroke="#111" stroke-width="1.8"/>
<line x1="1086.0" y1="338.4" x2="1086.0" y2="342.8" stroke="#111" stroke-width="1.8"/>
<line x1="1129.5" y1="338.4" x2="1129.5" y2="342.8" stroke="#111" stroke-width="1.8"/>
<line x1="1173.0" y1="338.4" x2="1173.0" y2="342.8" stroke="#111" stroke-width="1.8"/>
<line x1="1216.5" y1="338.4" x2="1216.5" y2="342.8" stroke="#111" stroke-width="1.8"/>
<line x1="1259.9" y1="338.4" x2="1259.9" y2="342.8" stroke="#111" stroke-width="1.8"/>
<line x1="1303.4" y1="338.4" x2="1303.4" y2="342.8" stroke="#111" stroke-width="1.8"/>
<line x1="1346.9" y1="338.4" x2="1346.9" y2="342.8" stroke="#111" stroke-width="1.8"/>
<line x1="1390.3" y1="338.4" x2="1390.3" y2="342.8" stroke="#111" stroke-width="1.8"/>
<line x1="1433.8" y1="338.4" x2="1433.8" y2="342.8" stroke="#111" stroke-width="1.8"/>
<line x1="1477.3" y1="338.4" x2="1477.3" y2="342.8" stroke="#111" stroke-width="1.8"/>
<line x1="1520.8" y1="338.4" x2="1520.8" y2="342.8" stroke="#111" stroke-width="1.8"/>
<line x1="1564.2" y1="338.4" x2="1564.2" y2="342.8" stroke="#111" stroke-width="1.8"/>
<line x1="1607.7" y1="338.4" x2="1607.7" y2="342.8" stroke="#111" stroke-width="1.8"/>
<line x1="1651.2" y1="338.4" x2="1651.2" y2="342.8" stroke="#111" stroke-width="1.8"/>
<line x1="1694.6" y1="338.4" x2="1694.6" y2="342.8" stroke="#111" stroke-width="1.8"/>
<line x1="1738.1" y1="338.4" x2="1738.1" y2="342.8" stroke="#111" stroke-width="1.8"/>
<line x1="1781.6" y1="338.4" x2="1781.6" y2="342.8" stroke="#111" stroke-width="1.8"/>
<line x1="1825.0" y1="338.4" x2="1825.0" y2="342.8" stroke="#111" stroke-width="1.8"/>
<text x="412.2" y="359.2" font-size="17.59" fill="#111" stroke="#111" stroke-width="0.25" textLength="44.4" lengthAdjust="spacingAndGlyphs">72250</text>
<text x="455.7" y="381.7" font-size="17.59" fill="#111" stroke="#111" stroke-width="0.25" textLength="44.4" lengthAdjust="spacingAndGlyphs">72500</text>
<text x="499.1" y="359.2" font-size="17.59" fill="#111" stroke="#111" stroke-width="0.25" textLength="44.4" lengthAdjust="spacingAndGlyphs">72750</text>
<text x="542.6" y="381.7" font-size="17.59" fill="#111" stroke="#111" stroke-width="0.25" textLength="44.4" lengthAdjust="spacingAndGlyphs">73000</text>
<text x="586.1" y="359.2" font-size="17.59" fill="#111" stroke="#111" stroke-width="0.25" textLength="44.4" lengthAdjust="spacingAndGlyphs">73250</text>
<text x="629.5" y="381.7" font-size="17.59" fill="#111" stroke="#111" stroke-width="0.25" textLength="44.4" lengthAdjust="spacingAndGlyphs">73500</text>
<text x="673.0" y="359.2" font-size="17.59" fill="#111" stroke="#111" stroke-width="0.25" textLength="44.4" lengthAdjust="spacingAndGlyphs">73750</text>
<text x="716.5" y="381.7" font-size="17.59" fill="#111" stroke="#111" stroke-width="0.25" textLength="44.4" lengthAdjust="spacingAndGlyphs">74000</text>
<text x="759.9" y="359.2" font-size="17.59" fill="#111" stroke="#111" stroke-width="0.25" textLength="44.4" lengthAdjust="spacingAndGlyphs">74250</text>
<text x="803.4" y="381.7" font-size="17.59" fill="#111" stroke="#111" stroke-width="0.25" textLength="44.4" lengthAdjust="spacingAndGlyphs">74500</text>
<text x="846.9" y="359.2" font-size="17.59" fill="#111" stroke="#111" stroke-width="0.25" textLength="44.4" lengthAdjust="spacingAndGlyphs">74750</text>
<text x="890.4" y="381.7" font-size="17.59" fill="#111" stroke="#111" stroke-width="0.25" textLength="44.4" lengthAdjust="spacingAndGlyphs">75000</text>
<text x="933.8" y="359.2" font-size="17.59" fill="#111" stroke="#111" stroke-width="0.25" textLength="44.4" lengthAdjust="spacingAndGlyphs">75250</text>
<text x="977.3" y="381.7" font-size="17.59" fill="#111" stroke="#111" stroke-width="0.25" textLength="44.4" lengthAdjust="spacingAndGlyphs">75500</text>
<text x="1020.8" y="359.2" font-size="17.59" fill="#111" stroke="#111" stroke-width="0.25" textLength="44.4" lengthAdjust="spacingAndGlyphs">75750</text>
<text x="1064.2" y="381.7" font-size="17.59" fill="#111" stroke="#111" stroke-width="0.25" textLength="44.4" lengthAdjust="spacingAndGlyphs">76000</text>
<text x="1107.7" y="359.2" font-size="17.59" fill="#111" stroke="#111" stroke-width="0.25" textLength="44.4" lengthAdjust="spacingAndGlyphs">76250</text>
<text x="1151.2" y="381.7" font-size="17.59" fill="#111" stroke="#111" stroke-width="0.25" textLength="44.4" lengthAdjust="spacingAndGlyphs">76500</text>
<text x="1194.6" y="359.2" font-size="17.59" fill="#111" stroke="#111" stroke-width="0.25" textLength="44.4" lengthAdjust="spacingAndGlyphs">76750</text>
<text x="1238.1" y="381.7" font-size="17.59" fill="#111" stroke="#111" stroke-width="0.25" textLength="44.4" lengthAdjust="spacingAndGlyphs">77000</text>
<text x="1281.6" y="359.2" font-size="17.59" fill="#111" stroke="#111" stroke-width="0.25" textLength="44.4" lengthAdjust="spacingAndGlyphs">77250</text>
<text x="1325.1" y="381.7" font-size="17.59" fill="#111" stroke="#111" stroke-width="0.25" textLength="44.4" lengthAdjust="spacingAndGlyphs">77500</text>
<text x="1368.5" y="359.2" font-size="17.59" fill="#111" stroke="#111" stroke-width="0.25" textLength="44.4" lengthAdjust="spacingAndGlyphs">77750</text>
<text x="1412.0" y="381.7" font-size="17.59" fill="#111" stroke="#111" stroke-width="0.25" textLength="44.4" lengthAdjust="spacingAndGlyphs">78000</text>
<text x="1455.5" y="359.2" font-size="17.59" fill="#111" stroke="#111" stroke-width="0.25" textLength="44.4" lengthAdjust="spacingAndGlyphs">78250</text>
<text x="1498.9" y="381.7" font-size="17.59" fill="#111" stroke="#111" stroke-width="0.25" textLength="44.4" lengthAdjust="spacingAndGlyphs">78500</text>
<text x="1542.4" y="359.2" font-size="17.59" fill="#111" stroke="#111" stroke-width="0.25" textLength="44.4" lengthAdjust="spacingAndGlyphs">78750</text>
<text x="1585.9" y="381.7" font-size="17.59" fill="#111" stroke="#111" stroke-width="0.25" textLength="44.4" lengthAdjust="spacingAndGlyphs">79000</text>
<text x="1629.3" y="359.2" font-size="17.59" fill="#111" stroke="#111" stroke-width="0.25" textLength="44.4" lengthAdjust="spacingAndGlyphs">79250</text>
<text x="1672.8" y="381.7" font-size="17.59" fill="#111" stroke="#111" stroke-width="0.25" textLength="44.4" lengthAdjust="spacingAndGlyphs">79500</text>
<text x="1716.3" y="359.2" font-size="17.59" fill="#111" stroke="#111" stroke-width="0.25" textLength="44.4" lengthAdjust="spacingAndGlyphs">79750</text>
<text x="1759.9" y="381.7" font-size="17.59" fill="#111" stroke="#111" stroke-width="0.25" textLength="44.3" lengthAdjust="spacingAndGlyphs">80000</text>
<text x="1803.3" y="359.2" font-size="17.59" fill="#111" stroke="#111" stroke-width="0.25" textLength="44.3" lengthAdjust="spacingAndGlyphs">80250</text>
<polyline points="471.73,409.68 478.35,408.25 484.96,406.83 491.58,405.42 498.20,404.01 504.81,402.61 511.43,401.22 518.04,399.83 524.66,398.46 531.28,397.09 537.89,395.73 544.51,394.38 551.13,393.04 557.74,391.71 564.36,390.38 570.97,389.07 577.59,387.76 584.21,386.47 590.82,385.18 597.44,383.90 604.05,382.64 610.67,381.38 617.29,380.13 623.90,378.90 630.52,377.67 637.14,376.46 643.75,375.25 650.37,374.06 656.98,372.88 663.60,371.70 670.22,370.55 676.83,369.40 683.45,368.26 690.06,367.14 696.68,366.03 703.30,364.93 709.91,363.84 716.53,362.77 723.15,361.71 729.76,360.66 736.38,359.62 742.99,358.60 749.61,357.59 756.23,356.60 762.84,355.62 769.46,354.65 776.07,353.70 782.69,352.76 789.31,351.84 795.92,350.93 802.54,350.03 809.15,349.15 815.77,348.29 822.39,347.44 829.00,346.61 835.62,345.79 842.24,344.99 848.85,344.21 855.47,343.44 862.08,342.68 868.70,341.95 875.32,341.23 881.93,340.53 888.55,339.84 895.16,339.17 901.78,338.52 908.40,337.89 915.01,337.27 921.63,336.67 928.25,336.10 934.86,335.53 941.48,334.99 948.09,334.46 954.71,333.96 961.33,333.47 967.94,333.00 974.56,332.55 981.17,332.12 987.79,331.71 994.41,331.32 1001.02,330.95 1007.64,330.59 1014.25,330.26 1020.87,329.95 1027.49,329.66 1034.10,329.39 1040.72,329.13 1047.34,328.90 1053.95,328.69 1060.57,328.50 1067.18,328.33 1073.80,328.19 1080.42,328.06 1087.03,327.95 1093.65,327.87 1100.26,327.81 1106.88,327.77 1113.50,327.75 1120.11,327.75 1126.73,327.77 1133.35,327.82 1139.96,327.89 1146.58,327.98 1153.19,328.09 1159.81,328.23 1166.43,328.38 1173.04,328.56 1179.66,328.77 1186.27,328.99 1192.89,329.24 1199.51,329.51 1206.12,329.80 1212.74,330.12 1219.36,330.46 1225.97,330.82 1232.59,331.21 1239.20,331.61 1245.82,332.05 1252.44,332.50 1259.05,332.98 1265.67,333.48 1272.28,334.00 1278.90,334.55 1285.52,335.12 1292.13,335.72 1298.75,336.34 1305.36,336.98 1311.98,337.64 1318.60,338.33 1325.21,339.05 1331.83,339.78 1338.45,340.54 1345.06,341.32 1351.68,342.13 1358.29,342.96 1364.91,343.81 1371.53,344.69 1378.14,345.59 1384.76,346.52 1391.37,347.46 1397.99,348.43 1404.61,349.43 1411.22,350.45 1417.84,351.49 1424.46,352.55 1431.07,353.64 1437.69,354.75 1444.30,355.88 1450.92,357.04 1457.54,358.22 1464.15,359.42 1470.77,360.65 1477.38,361.90 1484.00,363.17 1490.62,364.47 1497.23,365.78 1503.85,367.13 1510.46,368.49 1517.08,369.87 1523.70,371.28 1530.31,372.71 1536.93,374.16 1543.55,375.64 1550.16,377.14 1556.78,378.66 1563.39,380.20 1570.01,381.76 1576.63,383.34 1583.24,384.95 1589.86,386.58 1596.47,388.23 1603.09,389.90 1609.71,391.59 1616.32,393.30 1622.94,395.04 1629.56,396.79 1636.17,398.57 1642.79,400.37 1649.40,402.18 1656.02,404.02 1662.64,405.88 1669.25,407.76 1675.87,409.66 1682.48,411.57 1689.10,413.51 1695.72,415.47 1702.33,417.45 1708.95,419.44 1715.57,421.46 1722.18,423.50 1728.80,425.55 1735.41,427.62 1742.03,429.72 1748.65,431.83 1755.26,433.96 1761.88,436.10 1768.49,438.27 1775.11,440.45 1781.73,442.65 1788.34,444.87 1794.96,447.11" fill="none" stroke="#1E3CFF" stroke-width="1.5" stroke-linejoin="round"/>
<polyline points="471.73,399.69 1086.05,239.72 1259.93,194.45 1346.87,149.17 1794.96,382.53" fill="none" stroke="#0000F5" stroke-width="3.1" stroke-linejoin="round"/>
<line x1="434.0" y1="132.7" x2="434.0" y2="472.2" stroke="#D0D0D0" stroke-width="2.2"/>
<line x1="434.0" y1="337.1" x2="1825.0" y2="337.1" stroke="#D0D0D0" stroke-width="2.4"/>
<circle cx="1080.5" cy="241.2" r="4" fill="#0000F5"/>
<circle cx="1080.5" cy="328.1" r="4" fill="#1E3CFF"/>
<rect x="911" y="320" width="10" height="39" rx="3" fill="#FF0000"/>
<rect x="1345.8" y="322.8" width="6.3" height="39" rx="3.1" fill="#FF0000"/>
<text x="-0.5" y="529.0" font-size="17.59" fill="#111" stroke="#111" stroke-width="0.25" textLength="75.1" lengthAdjust="spacingAndGlyphs">Портфель</text>
<text x="-0.5" y="566.5" font-size="18.75" fill="#111" stroke="#111" stroke-width="0.25" textLength="100.1" lengthAdjust="spacingAndGlyphs">Нейтральная</text>
<polyline points="113.6,558.3 119.4,564.5 125.2,558.3" fill="none" stroke="#444" stroke-width="1.4"/>
<text x="153.0" y="565.7" font-size="18.60" fill="#111" stroke="#111" stroke-width="0.25" textLength="59.6" lengthAdjust="spacingAndGlyphs">Импорт</text>
<text x="243.6" y="565.7" font-size="18.60" fill="#111" stroke="#111" stroke-width="0.25" textLength="64.1" lengthAdjust="spacingAndGlyphs">Удалить</text>
<text x="340.1" y="566.6" font-size="18.60" fill="#111" stroke="#111" stroke-width="0.25" textLength="79.8" lengthAdjust="spacingAndGlyphs">Сохранить</text>
<text x="484.5" y="567.6" font-size="18.60" fill="#3B78C8" stroke="#3B78C8" stroke-width="0.25" textLength="25.8" lengthAdjust="spacingAndGlyphs">DH</text>
<path d="M560,557.5 L565,552.5 L570,557.5 Z M560,565.5 L565,570.5 L570,565.5 Z" fill="#222"/>
<text x="531.1" y="567.5" font-size="18.60" fill="#111" stroke="#111" stroke-width="0.25" textLength="10.7" lengthAdjust="spacingAndGlyphs">0</text>
<path d="M618.5,557.5 L623.5,552.5 L628.5,557.5 Z M618.5,565.5 L623.5,570.5 L628.5,565.5 Z" fill="#222"/>
<text x="590.4" y="567.5" font-size="18.60" fill="#111" stroke="#111" stroke-width="0.25" textLength="9.5" lengthAdjust="spacingAndGlyphs">1</text>
<text x="714.9" y="565.8" font-size="18.60" fill="#111" stroke="#111" stroke-width="0.25" textLength="15.9" lengthAdjust="spacingAndGlyphs">M</text>
<text x="828.7" y="566.6" font-size="18.60" fill="#111" stroke="#111" stroke-width="0.25" textLength="13.8" lengthAdjust="spacingAndGlyphs">D</text>
<text x="875.1" y="566.6" font-size="18.60" fill="#111" stroke="#111" stroke-width="0.25" textLength="10.7" lengthAdjust="spacingAndGlyphs">0</text>
<text x="917.2" y="566.6" font-size="18.60" fill="#111" stroke="#111" stroke-width="0.25" textLength="19.9" lengthAdjust="spacingAndGlyphs">V1</text>
<text x="969.6" y="566.6" font-size="18.60" fill="#111" stroke="#111" stroke-width="0.25" textLength="10.7" lengthAdjust="spacingAndGlyphs">0</text>
<text x="1011.4" y="566.6" font-size="18.60" fill="#111" stroke="#111" stroke-width="0.25" textLength="21.1" lengthAdjust="spacingAndGlyphs">V2</text>
<text x="1065.1" y="566.6" font-size="18.60" fill="#9A9A9A" stroke="#9A9A9A" stroke-width="0.25" textLength="10.7" lengthAdjust="spacingAndGlyphs">0</text>
<text x="1143.6" y="566.6" font-size="18.60" fill="#111" stroke="#111" stroke-width="0.25" textLength="20.6" lengthAdjust="spacingAndGlyphs">P1</text>
<text x="1206.6" y="566.6" font-size="18.60" fill="#111" stroke="#111" stroke-width="0.25" textLength="10.7" lengthAdjust="spacingAndGlyphs">0</text>
<text x="1266.7" y="566.5" font-size="18.90" fill="#111" stroke="#111" stroke-width="0.25" textLength="82.4" lengthAdjust="spacingAndGlyphs">SiZ0 76286</text>
<text x="1371.5" y="567.3" font-size="18.60" fill="#111" stroke="#111" stroke-width="0.25">P2</text>
<text x="1449.6" y="567.8" font-size="18.60" fill="#9A9A9A" stroke="#9A9A9A" stroke-width="0.25" textLength="10.7" lengthAdjust="spacingAndGlyphs">0</text>
<text x="1631.6" y="564.8" font-size="18.60" fill="#111" stroke="#111" stroke-width="0.25" textLength="114.2" lengthAdjust="spacingAndGlyphs">Рассчитать ГО</text>
<text x="1869.4" y="656.2" font-size="18.90" fill="#111" stroke="#111" stroke-width="0.25" textLength="11.9" lengthAdjust="spacingAndGlyphs">X</text>
<text x="1869.4" y="689.3" font-size="18.90" fill="#111" stroke="#111" stroke-width="0.25" textLength="11.9" lengthAdjust="spacingAndGlyphs">X</text>
<text x="1869.4" y="722.3" font-size="18.90" fill="#111" stroke="#111" stroke-width="0.25" textLength="11.9" lengthAdjust="spacingAndGlyphs">X</text>
<text x="1869.4" y="755.4" font-size="18.90" fill="#111" stroke="#111" stroke-width="0.25" textLength="11.9" lengthAdjust="spacingAndGlyphs">X</text>
<text x="1869.4" y="788.4" font-size="18.90" fill="#111" stroke="#111" stroke-width="0.25" textLength="11.9" lengthAdjust="spacingAndGlyphs">X</text>
<text x="1869.4" y="821.5" font-size="18.90" fill="#111" stroke="#111" stroke-width="0.25" textLength="11.9" lengthAdjust="spacingAndGlyphs">X</text>
<text x="1869.4" y="854.6" font-size="18.90" fill="#111" stroke="#111" stroke-width="0.25" textLength="11.9" lengthAdjust="spacingAndGlyphs">X</text>
<polyline points="28.7,649.8 32.7,654.4 40.6,644.7" fill="none" stroke="#333" stroke-width="1.5"/>
<polyline points="28.7,682.9 32.7,687.5 40.6,677.8" fill="none" stroke="#333" stroke-width="1.5"/>
<polyline points="28.7,715.9 32.7,720.5 40.6,710.8" fill="none" stroke="#333" stroke-width="1.5"/>
<polyline points="28.7,749.0 32.7,753.6 40.6,743.9" fill="none" stroke="#333" stroke-width="1.5"/>
<polyline points="28.7,815.1 32.7,819.7 40.6,810.0" fill="none" stroke="#333" stroke-width="1.5"/>
<polyline points="28.7,848.2 32.7,852.8 40.6,843.1" fill="none" stroke="#333" stroke-width="1.5"/>
<text x="6.5" y="618.8" font-size="18.17" fill="#111" stroke="#111" stroke-width="0.25" textLength="54.5" lengthAdjust="spacingAndGlyphs">Расчет</text>
<text x="188.9" y="618.8" font-size="18.17" fill="#111" stroke="#111" stroke-width="0.25" textLength="87.6" lengthAdjust="spacingAndGlyphs">Код бумаги</text>
<text x="432.8" y="607.7" font-size="17.88" fill="#111" stroke="#111" stroke-width="0.25" textLength="28.1" lengthAdjust="spacingAndGlyphs">Тип</text>
<text x="413.4" y="627.0" font-size="17.88" fill="#111" stroke="#111" stroke-width="0.25" textLength="65.4" lengthAdjust="spacingAndGlyphs">опциона</text>
<text x="545.0" y="607.7" font-size="17.88" fill="#111" stroke="#111" stroke-width="0.25" textLength="37.0" lengthAdjust="spacingAndGlyphs">Дата</text>
<text x="521.3" y="627.0" font-size="17.88" fill="#111" stroke="#111" stroke-width="0.25" textLength="84.5" lengthAdjust="spacingAndGlyphs">погашения</text>
<text x="674.7" y="607.7" font-size="17.88" fill="#111" stroke="#111" stroke-width="0.25" textLength="61.9" lengthAdjust="spacingAndGlyphs">Дней до</text>
<text x="663.1" y="627.0" font-size="17.88" fill="#111" stroke="#111" stroke-width="0.25" textLength="84.5" lengthAdjust="spacingAndGlyphs">погашения</text>
<text x="790.5" y="618.8" font-size="18.17" fill="#111" stroke="#111" stroke-width="0.25" textLength="90.3" lengthAdjust="spacingAndGlyphs">Количество</text>
<text x="930.2" y="607.7" font-size="17.88" fill="#111" stroke="#111" stroke-width="0.25" textLength="39.5" lengthAdjust="spacingAndGlyphs">Цена</text>
<text x="914.8" y="627.0" font-size="17.88" fill="#111" stroke="#111" stroke-width="0.25" textLength="72.0" lengthAdjust="spacingAndGlyphs">открытия</text>
<text x="1048.1" y="607.7" font-size="17.88" fill="#111" stroke="#111" stroke-width="0.25" textLength="116.3" lengthAdjust="spacingAndGlyphs">Волатильность</text>
<text x="1070.8" y="627.0" font-size="17.88" fill="#111" stroke="#111" stroke-width="0.25" textLength="72.0" lengthAdjust="spacingAndGlyphs">открытия</text>
<text x="1223.9" y="607.7" font-size="17.88" fill="#111" stroke="#111" stroke-width="0.25" textLength="114.5" lengthAdjust="spacingAndGlyphs">Теоретическая</text>
<text x="1261.4" y="627.0" font-size="17.88" fill="#111" stroke="#111" stroke-width="0.25" textLength="37.6" lengthAdjust="spacingAndGlyphs">цена</text>
<text x="1367.2" y="618.8" font-size="18.17" fill="#111" stroke="#111" stroke-width="0.25" textLength="61.4" lengthAdjust="spacingAndGlyphs">Профит</text>
<text x="1445.2" y="618.8" font-size="18.17" fill="#111" stroke="#111" stroke-width="0.25" textLength="118.2" lengthAdjust="spacingAndGlyphs">Волатильность</text>
<text x="1582.5" y="618.8" font-size="18.17" fill="#111" stroke="#111" stroke-width="0.25" textLength="56.0" lengthAdjust="spacingAndGlyphs">Дельта</text>
<text x="1665.1" y="618.8" font-size="18.17" fill="#111" stroke="#111" stroke-width="0.25" textLength="50.6" lengthAdjust="spacingAndGlyphs">Гамма</text>
<text x="1747.6" y="618.8" font-size="18.17" fill="#111" stroke="#111" stroke-width="0.25" textLength="35.8" lengthAdjust="spacingAndGlyphs">Вега</text>
<text x="1809.5" y="618.8" font-size="18.17" fill="#111" stroke="#111" stroke-width="0.25" textLength="36.5" lengthAdjust="spacingAndGlyphs">Тета</text>
<text x="1869.9" y="618.8" font-size="18.17" fill="#111" stroke="#111" stroke-width="0.25" textLength="11.1" lengthAdjust="spacingAndGlyphs">X</text>
<text x="187.9" y="656.2" font-size="19.19" fill="#111" stroke="#111" stroke-width="0.25" textLength="90.1" lengthAdjust="spacingAndGlyphs">Si76000BX0</text>
<text x="433.9" y="656.2" font-size="19.19" fill="#111" stroke="#111" stroke-width="0.25" textLength="24.3" lengthAdjust="spacingAndGlyphs">Put</text>
<text x="522.9" y="656.2" font-size="19.19" fill="#111" stroke="#111" stroke-width="0.25" textLength="81.1" lengthAdjust="spacingAndGlyphs">17.12.2020</text>
<text x="696.5" y="656.2" font-size="19.19" fill="#111" stroke="#111" stroke-width="0.25" textLength="18.0" lengthAdjust="spacingAndGlyphs">27</text>
<text x="829.0" y="656.2" font-size="19.19" fill="#111" stroke="#111" stroke-width="0.25" textLength="14.4" lengthAdjust="spacingAndGlyphs">-1</text>
<text x="932.5" y="656.2" font-size="19.19" fill="#111" stroke="#111" stroke-width="0.25" textLength="36.1" lengthAdjust="spacingAndGlyphs">1320</text>
<text x="1086.3" y="656.2" font-size="19.19" fill="#111" stroke="#111" stroke-width="0.25" textLength="40.6" lengthAdjust="spacingAndGlyphs">17,62</text>
<text x="1251.4" y="656.2" font-size="19.19" fill="#111" stroke="#111" stroke-width="0.25" textLength="58.6" lengthAdjust="spacingAndGlyphs">1105,46</text>
<text x="1373.6" y="656.2" font-size="19.19" fill="#111" stroke="#111" stroke-width="0.25" textLength="49.6" lengthAdjust="spacingAndGlyphs">214,54</text>
<text x="1484.3" y="656.2" font-size="19.19" fill="#111" stroke="#111" stroke-width="0.25" textLength="40.6" lengthAdjust="spacingAndGlyphs">15,02</text>
<text x="1595.0" y="656.2" font-size="19.19" fill="#111" stroke="#111" stroke-width="0.25" textLength="31.6" lengthAdjust="spacingAndGlyphs">0,46</text>
<text x="1654.8" y="656.2" font-size="19.19" fill="#111" stroke="#111" stroke-width="0.25" textLength="73.0" lengthAdjust="spacingAndGlyphs">-0,000127</text>
<text x="1743.5" y="656.2" font-size="19.19" fill="#111" stroke="#111" stroke-width="0.25" textLength="46.0" lengthAdjust="spacingAndGlyphs">-82,41</text>
<text x="1807.8" y="656.2" font-size="19.19" fill="#111" stroke="#111" stroke-width="0.25" textLength="40.6" lengthAdjust="spacingAndGlyphs">22,83</text>
<text x="188.8" y="689.3" font-size="19.19" fill="#111" stroke="#111" stroke-width="0.25" textLength="88.3" lengthAdjust="spacingAndGlyphs">Si76000BL0</text>
<text x="432.8" y="689.3" font-size="19.19" fill="#111" stroke="#111" stroke-width="0.25" textLength="27.9" lengthAdjust="spacingAndGlyphs">Call</text>
<text x="522.9" y="689.3" font-size="19.19" fill="#111" stroke="#111" stroke-width="0.25" textLength="81.1" lengthAdjust="spacingAndGlyphs">17.12.2020</text>
<text x="696.5" y="689.3" font-size="19.19" fill="#111" stroke="#111" stroke-width="0.25" textLength="18.0" lengthAdjust="spacingAndGlyphs">27</text>
<text x="831.4" y="689.3" font-size="19.19" fill="#111" stroke="#111" stroke-width="0.25" textLength="9.0" lengthAdjust="spacingAndGlyphs">1</text>
<text x="932.5" y="689.3" font-size="19.19" fill="#111" stroke="#111" stroke-width="0.25" textLength="36.1" lengthAdjust="spacingAndGlyphs">1289</text>
<text x="1086.2" y="689.3" font-size="19.19" fill="#111" stroke="#111" stroke-width="0.25" textLength="40.6" lengthAdjust="spacingAndGlyphs">13,78</text>
<text x="1251.4" y="689.3" font-size="19.19" fill="#111" stroke="#111" stroke-width="0.25" textLength="58.6" lengthAdjust="spacingAndGlyphs">1391,46</text>
<text x="1373.5" y="689.3" font-size="19.19" fill="#111" stroke="#111" stroke-width="0.25" textLength="49.6" lengthAdjust="spacingAndGlyphs">102,46</text>
<text x="1484.3" y="689.3" font-size="19.19" fill="#111" stroke="#111" stroke-width="0.25" textLength="40.6" lengthAdjust="spacingAndGlyphs">15,02</text>
<text x="1594.9" y="689.3" font-size="19.19" fill="#111" stroke="#111" stroke-width="0.25" textLength="31.6" lengthAdjust="spacingAndGlyphs">0,54</text>
<text x="1657.5" y="689.3" font-size="19.19" fill="#111" stroke="#111" stroke-width="0.25" textLength="67.6" lengthAdjust="spacingAndGlyphs">0,000127</text>
<text x="1746.2" y="689.3" font-size="19.19" fill="#111" stroke="#111" stroke-width="0.25" textLength="40.6" lengthAdjust="spacingAndGlyphs">82,41</text>
<text x="1805.1" y="689.3" font-size="19.19" fill="#111" stroke="#111" stroke-width="0.25" textLength="46.0" lengthAdjust="spacingAndGlyphs">-22,83</text>
<text x="188.8" y="722.3" font-size="19.19" fill="#111" stroke="#111" stroke-width="0.25" textLength="88.3" lengthAdjust="spacingAndGlyphs">Si77000BL0</text>
<text x="432.8" y="722.3" font-size="19.19" fill="#111" stroke="#111" stroke-width="0.25" textLength="27.9" lengthAdjust="spacingAndGlyphs">Call</text>
<text x="522.9" y="722.3" font-size="19.19" fill="#111" stroke="#111" stroke-width="0.25" textLength="81.1" lengthAdjust="spacingAndGlyphs">17.12.2020</text>
<text x="696.5" y="722.3" font-size="19.19" fill="#111" stroke="#111" stroke-width="0.25" textLength="18.0" lengthAdjust="spacingAndGlyphs">27</text>
<text x="831.4" y="722.3" font-size="19.19" fill="#111" stroke="#111" stroke-width="0.25" textLength="9.0" lengthAdjust="spacingAndGlyphs">1</text>
<text x="937.3" y="722.3" font-size="19.19" fill="#111" stroke="#111" stroke-width="0.25" textLength="27.0" lengthAdjust="spacingAndGlyphs">903</text>
<text x="1086.2" y="722.3" font-size="19.19" fill="#111" stroke="#111" stroke-width="0.25" textLength="40.6" lengthAdjust="spacingAndGlyphs">14,73</text>
<text x="1256.2" y="722.3" font-size="19.19" fill="#111" stroke="#111" stroke-width="0.25" textLength="49.6" lengthAdjust="spacingAndGlyphs">964,03</text>
<text x="1378.3" y="722.3" font-size="19.19" fill="#111" stroke="#111" stroke-width="0.25" textLength="40.6" lengthAdjust="spacingAndGlyphs">61,03</text>
<text x="1484.2" y="722.3" font-size="19.19" fill="#111" stroke="#111" stroke-width="0.25" textLength="40.6" lengthAdjust="spacingAndGlyphs">15,48</text>
<text x="1595.1" y="722.3" font-size="19.19" fill="#111" stroke="#111" stroke-width="0.25" textLength="31.6" lengthAdjust="spacingAndGlyphs">0,42</text>
<text x="1657.5" y="722.3" font-size="19.19" fill="#111" stroke="#111" stroke-width="0.25" textLength="67.6" lengthAdjust="spacingAndGlyphs">0,000122</text>
<text x="1746.1" y="722.3" font-size="19.19" fill="#111" stroke="#111" stroke-width="0.25" textLength="40.6" lengthAdjust="spacingAndGlyphs">81,29</text>
<text x="1805.2" y="722.3" font-size="19.19" fill="#111" stroke="#111" stroke-width="0.25" textLength="46.0" lengthAdjust="spacingAndGlyphs">-23,21</text>
<text x="188.8" y="755.4" font-size="19.19" fill="#111" stroke="#111" stroke-width="0.25" textLength="88.3" lengthAdjust="spacingAndGlyphs">Si77500BL0</text>
<text x="432.8" y="755.4" font-size="19.19" fill="#111" stroke="#111" stroke-width="0.25" textLength="27.9" lengthAdjust="spacingAndGlyphs">Call</text>
<text x="522.9" y="755.4" font-size="19.19" fill="#111" stroke="#111" stroke-width="0.25" textLength="81.1" lengthAdjust="spacingAndGlyphs">17.12.2020</text>
<text x="696.5" y="755.4" font-size="19.19" fill="#111" stroke="#111" stroke-width="0.25" textLength="18.0" lengthAdjust="spacingAndGlyphs">27</text>
<text x="828.8" y="755.4" font-size="19.19" fill="#111" stroke="#111" stroke-width="0.25" textLength="14.4" lengthAdjust="spacingAndGlyphs">-4</text>
<text x="937.1" y="755.4" font-size="19.19" fill="#111" stroke="#111" stroke-width="0.25" textLength="27.0" lengthAdjust="spacingAndGlyphs">754</text>
<text x="1086.2" y="755.4" font-size="19.19" fill="#111" stroke="#111" stroke-width="0.25" textLength="40.6" lengthAdjust="spacingAndGlyphs">15,19</text>
<text x="1256.2" y="755.4" font-size="19.19" fill="#111" stroke="#111" stroke-width="0.25" textLength="49.6" lengthAdjust="spacingAndGlyphs">799,12</text>
<text x="1371.1" y="755.4" font-size="19.19" fill="#111" stroke="#111" stroke-width="0.25" textLength="55.0" lengthAdjust="spacingAndGlyphs">-180,48</text>
<text x="1484.3" y="755.4" font-size="19.19" fill="#111" stroke="#111" stroke-width="0.25" textLength="40.6" lengthAdjust="spacingAndGlyphs">15,77</text>
<text x="1592.3" y="755.4" font-size="19.19" fill="#111" stroke="#111" stroke-width="0.25" textLength="37.0" lengthAdjust="spacingAndGlyphs">-1,46</text>
<text x="1654.7" y="755.4" font-size="19.19" fill="#111" stroke="#111" stroke-width="0.25" textLength="73.0" lengthAdjust="spacingAndGlyphs">-0,000458</text>
<text x="1739.0" y="755.4" font-size="19.19" fill="#111" stroke="#111" stroke-width="0.25" textLength="55.0" lengthAdjust="spacingAndGlyphs">-312,47</text>
<text x="1812.3" y="755.4" font-size="19.19" fill="#111" stroke="#111" stroke-width="0.25" textLength="31.6" lengthAdjust="spacingAndGlyphs">90,9</text>
<text x="188.8" y="788.4" font-size="19.19" fill="#ABDAFC" stroke="#ABDAFC" stroke-width="0.25" textLength="88.3" lengthAdjust="spacingAndGlyphs">Si76500BL0</text>
<text x="432.8" y="788.4" font-size="19.19" fill="#ABDAFC" stroke="#ABDAFC" stroke-width="0.25" textLength="27.9" lengthAdjust="spacingAndGlyphs">Call</text>
<text x="522.9" y="788.4" font-size="19.19" fill="#ABDAFC" stroke="#ABDAFC" stroke-width="0.25" textLength="81.1" lengthAdjust="spacingAndGlyphs">17.12.2020</text>
<text x="696.5" y="788.4" font-size="19.19" fill="#ABDAFC" stroke="#ABDAFC" stroke-width="0.25" textLength="18.0" lengthAdjust="spacingAndGlyphs">27</text>
<text x="831.4" y="788.4" font-size="19.19" fill="#ABDAFC" stroke="#ABDAFC" stroke-width="0.25" textLength="9.0" lengthAdjust="spacingAndGlyphs">1</text>
<text x="932.5" y="788.4" font-size="19.19" fill="#ABDAFC" stroke="#ABDAFC" stroke-width="0.25" textLength="36.1" lengthAdjust="spacingAndGlyphs">1080</text>
<text x="1086.2" y="788.4" font-size="19.19" fill="#ABDAFC" stroke="#ABDAFC" stroke-width="0.25" textLength="40.6" lengthAdjust="spacingAndGlyphs">14,26</text>
<text x="1251.4" y="788.4" font-size="19.19" fill="#ABDAFC" stroke="#ABDAFC" stroke-width="0.25" textLength="58.6" lengthAdjust="spacingAndGlyphs">1160,63</text>
<text x="1378.3" y="788.4" font-size="19.19" fill="#ABDAFC" stroke="#ABDAFC" stroke-width="0.25" textLength="40.6" lengthAdjust="spacingAndGlyphs">80,63</text>
<text x="1484.3" y="788.4" font-size="19.19" fill="#ABDAFC" stroke="#ABDAFC" stroke-width="0.25" textLength="40.6" lengthAdjust="spacingAndGlyphs">15,23</text>
<text x="1595.0" y="788.4" font-size="19.19" fill="#ABDAFC" stroke="#ABDAFC" stroke-width="0.25" textLength="31.6" lengthAdjust="spacingAndGlyphs">0,48</text>
<text x="1657.5" y="788.4" font-size="19.19" fill="#ABDAFC" stroke="#ABDAFC" stroke-width="0.25" textLength="67.6" lengthAdjust="spacingAndGlyphs">0,000126</text>
<text x="1746.0" y="788.4" font-size="19.19" fill="#ABDAFC" stroke="#ABDAFC" stroke-width="0.25" textLength="40.6" lengthAdjust="spacingAndGlyphs">82,84</text>
<text x="1805.2" y="788.4" font-size="19.19" fill="#ABDAFC" stroke="#ABDAFC" stroke-width="0.25" textLength="46.0" lengthAdjust="spacingAndGlyphs">-23,27</text>
<text x="193.7" y="821.5" font-size="19.19" fill="#111" stroke="#111" stroke-width="0.25" textLength="77.5" lengthAdjust="spacingAndGlyphs">FixedProfit</text>
<text x="1394.1" y="821.5" font-size="19.19" fill="#111" stroke="#111" stroke-width="0.25" textLength="9.0" lengthAdjust="spacingAndGlyphs">0</text>
<text x="209.3" y="854.6" font-size="19.19" fill="#111" stroke="#111" stroke-width="0.25" textLength="47.5" lengthAdjust="spacingAndGlyphs">Итого:</text>
<text x="1373.5" y="854.6" font-size="19.19" fill="#111" stroke="#111" stroke-width="0.25" textLength="49.6" lengthAdjust="spacingAndGlyphs">197,55</text>
<text x="1592.2" y="854.6" font-size="19.19" fill="#111" stroke="#111" stroke-width="0.25" textLength="37.0" lengthAdjust="spacingAndGlyphs">-0,04</text>
<text x="1654.7" y="854.6" font-size="19.19" fill="#111" stroke="#111" stroke-width="0.25" textLength="73.0" lengthAdjust="spacingAndGlyphs">-0,000336</text>
<text x="1738.9" y="854.6" font-size="19.19" fill="#111" stroke="#111" stroke-width="0.25" textLength="55.0" lengthAdjust="spacingAndGlyphs">-231,18</text>
<text x="1807.8" y="854.6" font-size="19.19" fill="#111" stroke="#111" stroke-width="0.25" textLength="40.6" lengthAdjust="spacingAndGlyphs">67,69</text>
<text x="-7.4" y="975.6" font-size="18.46" fill="#111" stroke="#111" stroke-width="0.25" textLength="205.9" lengthAdjust="spacingAndGlyphs">Время обновления 40 мс</text>
<text x="209.2" y="975.6" font-size="18.46" fill="#111" stroke="#111" stroke-width="0.25" textLength="104.9" lengthAdjust="spacingAndGlyphs">Profit=197,55</text>
<text x="318.6" y="975.6" font-size="18.46" fill="#111" stroke="#111" stroke-width="0.25" textLength="115.9" lengthAdjust="spacingAndGlyphs">Delta(Δ)=-0,04</text>
<text x="439.3" y="975.6" font-size="18.46" fill="#111" stroke="#111" stroke-width="0.25" textLength="171.1" lengthAdjust="spacingAndGlyphs">Gamma(Γ)=-0,000336</text>
<text x="615.3" y="975.6" font-size="18.46" fill="#111" stroke="#111" stroke-width="0.25" textLength="105.9" lengthAdjust="spacingAndGlyphs">Vega=-231,18</text>
<text x="725.8" y="975.6" font-size="18.46" fill="#111" stroke="#111" stroke-width="0.25" textLength="121.0" lengthAdjust="spacingAndGlyphs">Theta(Θ)=67,69</text>
<path d="M10,1004.3 L20.2,1002.9 L20.2,1011.9 L10,1011.9 Z M21.4,1002.7 L34.2,1001.0 L34.2,1011.9 L21.4,1011.9 Z M10,1013.9 L20.2,1013.9 L20.2,1024.3 L10,1023.0 Z M21.4,1013.9 L34.2,1013.9 L34.2,1026.1 L21.4,1024.5 Z" fill="#FFFFFF"/>
<circle cx="97.3" cy="1010.3" r="8.3" fill="none" stroke="#FFFFFF" stroke-width="1.3"/><line x1="91.4" y1="1016.4" x2="82.3" y2="1025.6" stroke="#FFFFFF" stroke-width="1.4"/>
<path d="M154.3,1001.8 V1005.4 H169.6 V1001.8 M154.3,1025.2 V1021.4 H169.6 V1025.2" fill="none" stroke="#FFFFFF" stroke-width="1.3"/><rect x="154.3" y="1008.7" width="15.3" height="9.5" fill="none" stroke="#FFFFFF" stroke-width="1.3"/><line x1="176.7" y1="1002" x2="176.7" y2="1025" stroke="#FFFFFF" stroke-width="1.3"/><rect x="175" y="1008.6" width="3.4" height="3.4" fill="#FFFFFF"/>
<path d="M233.4,1006 V998.2 Q233.4,996.2 235.4,996.2 H249.8 Q251.8,996.2 251.8,998.2 V1006" fill="none" stroke="#D6D6D6" stroke-width="2"/>
<path d="M225,1005 H260 V1031 Q260,1032 259,1032 H226 Q225,1032 225,1031 Z" fill="#F4F4F4"/><rect x="225" y="1005" width="35" height="3.2" fill="#D0D0D0"/>
<rect x="236.2" y="1013" width="5.6" height="5.8" fill="#F25022"/><rect x="242.8" y="1013" width="5.8" height="5.8" fill="#7FBA00"/><rect x="236.2" y="1019.8" width="5.6" height="6" fill="#00A4EF"/><rect x="242.8" y="1019.8" width="5.8" height="6" fill="#FFB900"/>
<path d="M302,1002 Q302,1001 303,1001 H313.5 L316,1003.5 H333 Q333.8,1003.5 333.8,1004.5 V1008 H302 Z" fill="#E3A21A"/>
<rect x="302" y="1004.5" width="31.8" height="21.5" rx="1" fill="#FFD15B"/>
<path d="M307.6,1027.2 V1016.5 Q307.6,1015.3 308.8,1015.3 H327 Q328.2,1015.3 328.2,1016.5 V1027.2 H322.8 V1020.2 H316.8 V1027.2 Z" fill="#3B8EDB"/>
<path d="M375,1007.5 L393,997 L411,1007.5 V1029.7 H375 Z" fill="#1C91DE"/>
<path d="M375,1007.5 L393,997 L411,1007.5 Z" fill="#0B5BAE"/>
<path d="M378.5,1007 H407.5 L393,1015.8 Z" fill="#F0F0F0"/>
<path d="M375,1029.7 L393,1016.5 L411,1029.7 Z" fill="#1A86D6"/><path d="M411,1007.5 V1029.7 L393,1016.5 Z" fill="#33B5F0"/>
<path d="M467.7,1013.7 L453.32,1005.40 A16.6,16.6 0 0 1 482.08,1005.40 Z" fill="#DB4437"/>
<path d="M467.7,1013.7 L482.08,1005.40 A16.6,16.6 0 0 1 467.70,1030.30 Z" fill="#F4C20D"/>
<path d="M467.7,1013.7 L467.70,1030.30 A16.6,16.6 0 0 1 453.32,1005.40 Z" fill="#0F9D58"/>
<circle cx="467.7" cy="1013.7" r="7.9" fill="#FFFFFF"/><circle cx="467.7" cy="1013.7" r="6.3" fill="#4285F4"/>
<circle cx="542.8" cy="1013.5" r="15.3" fill="#0CA8E8"/><circle cx="535" cy="1004.5" r="6" fill="#0CA8E8"/><circle cx="551" cy="1022.5" r="6" fill="#0CA8E8"/>
<path d="M548.6,1007.3 Q546.5,1004.8 542.6,1004.8 Q537,1004.8 537,1009.2 Q537,1012.4 542.2,1013.4 Q548.6,1014.6 548.6,1018.2 Q548.6,1022.4 542.6,1022.4 Q538.2,1022.4 536.2,1019.4" fill="none" stroke="#FFFFFF" stroke-width="3.2" stroke-linecap="round"/>
<rect x="600" y="998.5" width="36" height="9.6" rx="1.5" fill="#C81E48"/><rect x="600" y="1008.6" width="36" height="9.8" rx="1.5" fill="#3B3FCE"/><rect x="600" y="1018.8" width="36" height="9.4" rx="1.5" fill="#15922F"/>
<rect x="601.5" y="1000.5" width="1.6" height="5" fill="#F5C000"/><rect x="601.5" y="1010.5" width="1.6" height="5" fill="#F5C000"/><rect x="601.5" y="1021" width="1.6" height="5" fill="#F5C000"/>
<rect x="612.8" y="998" width="10.4" height="30.5" fill="#E29A35"/><rect x="611" y="1011.5" width="13.5" height="8" rx="1.5" fill="none" stroke="#F0F0F0" stroke-width="1.5"/>
<path d="M675,1006.5 H711 V1030 Q711,1032 709,1032 H677 Q675,1032 675,1030 Z" fill="#1E7FD6"/>
<path d="M675,1008 V1002.5 Q675,1000.5 677,1000.2 L709,996.8 Q711,996.6 711,998.6 V1004.4 L677,1007 Z" fill="#42C4F2"/>
<path d="M681,1000 L686,999.4 L683,1006.4 L678,1006.8 Z M691,998.8 L696,998.2 L693,1005.6 L688,1006 Z M701,997.6 L706,997 L703,1004.8 L698,1005.2 Z" fill="#1A73C8"/>
<path d="M688.2,1011.5 L701.8,1019.5 L688.2,1027.5 Z" fill="#FFFFFF"/>
<circle cx="766" cy="1012.4" r="11.3" fill="none" stroke="#2E8A5D" stroke-width="7"/><path d="M770,1022 L778.5,1029.5 L777,1020 Z" fill="#2E8A5D"/>
<rect x="825" y="996" width="36" height="36" fill="#FFFFFF"/>
<g fill="#0AA0E8"><rect x="825" y="996" width="25.8" height="3"/><rect x="825" y="996" width="3" height="26.8"/><rect x="825" y="1028.8" width="36" height="3.1"/><rect x="858" y="1010.6" width="3" height="21.3"/></g>
<polyline points="826.5,1013.4 833.6,1013.4 837,1024.4 845.7,1004.6 850.4,1015.3 859.8,997.2" fill="none" stroke="#0AA0E8" stroke-width="3" stroke-linejoin="miter"/>
<defs><linearGradient id="npg" x1="0" y1="0" x2="0" y2="1"><stop offset="0" stop-color="#D8F0F8"/><stop offset="0.45" stop-color="#8FCDE0"/><stop offset="1" stop-color="#3E9FC0"/></linearGradient><linearGradient id="npd" x1="0" y1="0" x2="1" y2="0"><stop offset="0" stop-color="#3A9AB8"/><stop offset="0.7" stop-color="#1E5F78"/><stop offset="1" stop-color="#2E7F98"/></linearGradient></defs>
<rect x="930.4" y="1002" width="2.8" height="23" fill="#C89A48"/>
<path d="M912.4,998 L930.6,1000.8 L931,1003 L926.5,1029.2 L908,1023.5 L900.8,1020.3 Z" fill="#F2F4F6"/>
<path d="M912.4,1000.4 L930.9,1002.3 L920.4,1024.9 L900.8,1020.3 Z" fill="url(#npg)"/>
<path d="M912.4,1000.4 L914.5,1000.6 L909.8,1022.3 L900.8,1020.3 Z" fill="url(#npd)"/>
<path d="M912.4,998.2 L930.2,1000.7" stroke="#A8B0B4" stroke-width="2.2"/>
<polyline points="1492.8,1018 1502,1008.8 1511.2,1018" fill="none" stroke="#FFFFFF" stroke-width="1.3"/>
<path d="M1528.5,1025.5 Q1531,1012 1547.5,1001.8 Q1545,1017 1531,1022.5 Z" fill="#A67AD8"/><path d="M1528.5,1025.5 L1540,1011" stroke="#6E48A8" stroke-width="1"/>
<rect x="1563.3" y="1009" width="21.5" height="12" fill="none" stroke="#FFFFFF" stroke-width="1.3"/><rect x="1585" y="1012.5" width="1.8" height="5" fill="#FFFFFF"/><rect x="1565.6" y="1011.3" width="8.4" height="7.4" fill="#FFFFFF"/>
<g fill="none" stroke="#FFFFFF" stroke-width="1.2"><path d="M1602.5,1022.5 A19,19 0 0 1 1620.5,1006.5"/><path d="M1606.5,1022.5 A15,15 0 0 1 1620.5,1010.5" opacity="0.9"/><path d="M1610.5,1022.5 A11,11 0 0 1 1620.5,1014.5" /></g><circle cx="1618.6" cy="1021.8" r="1.5" fill="#FFFFFF"/>
<path d="M1635.3,1011.5 H1639.5 L1645.5,1006.3 V1022.3 L1639.5,1017.2 H1635.3 Z" fill="none" stroke="#FFFFFF" stroke-width="1.2"/>
<g fill="none" stroke="#FFFFFF" stroke-width="1.1"><path d="M1648.5,1011 A4.5,4.5 0 0 1 1648.5,1017.8"/><path d="M1651.5,1008.6 A7.8,7.8 0 0 1 1651.5,1020.2"/><path d="M1655,1006 A11,11 0 0 1 1655,1022.8" opacity="0.6"/></g>
<path d="M1843.6,1001.6 H1868.6 V1020.8 H1852 L1848,1026 V1020.8 H1843.6 Z" fill="#FFFFFF"/>
<g stroke="#3A2F2A" stroke-width="1.2"><line x1="1849" y1="1008.5" x2="1863" y2="1008.5"/><line x1="1849" y1="1012" x2="1863" y2="1012"/><line x1="1849" y1="1015.5" x2="1858" y2="1015.5"/></g>
<circle cx="1867.5" cy="1025.6" r="11.6" fill="#2E2A28" stroke="#9A9590" stroke-width="1.3"/>
<text x="1674.2" y="1021.0" font-size="18.17" fill="#FFFFFF" stroke="#FFFFFF" stroke-width="0.25" textLength="32.6" lengthAdjust="spacingAndGlyphs">РУС</text>
<text x="1750.3" y="1006.8" font-size="18.46" fill="#FFFFFF" stroke="#FFFFFF" stroke-width="0.25" textLength="43.6" lengthAdjust="spacingAndGlyphs">14:42</text>
<text x="1727.6" y="1034.5" font-size="19.19" fill="#FFFFFF" stroke="#FFFFFF" stroke-width="0.25" textLength="88.8" lengthAdjust="spacingAndGlyphs">20.11.2020</text>
<text x="1862.6" y="1031.8" font-size="18.17" fill="#FFFFFF" stroke="#FFFFFF" stroke-width="0.25" textLength="9.9" lengthAdjust="spacingAndGlyphs">3</text>
</svg>
</div></body></html>
